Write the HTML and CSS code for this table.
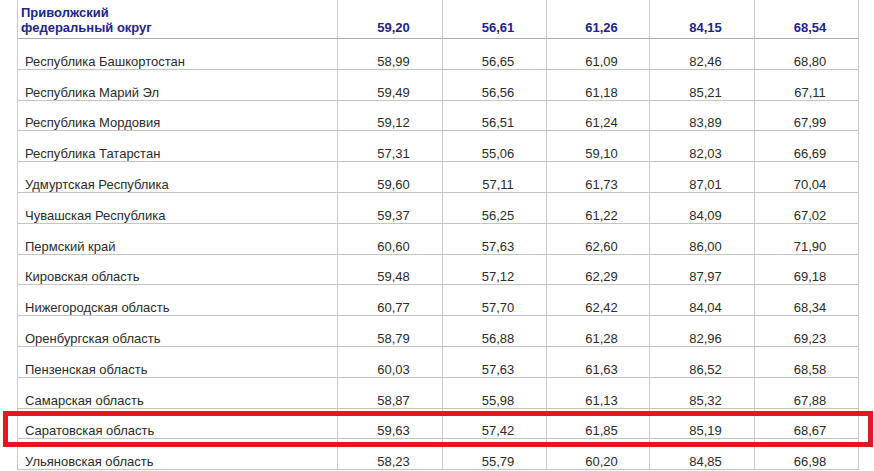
FILE: index.html
```html
<!DOCTYPE html>
<html lang="ru">
<head>
<meta charset="utf-8">
<title>Приволжский федеральный округ</title>
<link rel="stylesheet" href="styles.css">
</head>
<body>
<div class="page">
  <div class="grid">
    <div class="cell head name">Приволжский<br>федеральный округ</div>
    <div class="cell head num">59,20</div>
    <div class="cell head num">56,61</div>
    <div class="cell head num">61,26</div>
    <div class="cell head num">84,15</div>
    <div class="cell head num last">68,54</div>

    <div class="cell name">Республика Башкортостан</div>
    <div class="cell num">58,99</div><div class="cell num">56,65</div><div class="cell num">61,09</div><div class="cell num">82,46</div><div class="cell num last">68,80</div>

    <div class="cell name">Республика Марий Эл</div>
    <div class="cell num">59,49</div><div class="cell num">56,56</div><div class="cell num">61,18</div><div class="cell num">85,21</div><div class="cell num last">67,11</div>

    <div class="cell name">Республика Мордовия</div>
    <div class="cell num">59,12</div><div class="cell num">56,51</div><div class="cell num">61,24</div><div class="cell num">83,89</div><div class="cell num last">67,99</div>

    <div class="cell name">Республика Татарстан</div>
    <div class="cell num">57,31</div><div class="cell num">55,06</div><div class="cell num">59,10</div><div class="cell num">82,03</div><div class="cell num last">66,69</div>

    <div class="cell name">Удмуртская Республика</div>
    <div class="cell num">59,60</div><div class="cell num">57,11</div><div class="cell num">61,73</div><div class="cell num">87,01</div><div class="cell num last">70,04</div>

    <div class="cell name">Чувашская Республика</div>
    <div class="cell num">59,37</div><div class="cell num">56,25</div><div class="cell num">61,22</div><div class="cell num">84,09</div><div class="cell num last">67,02</div>

    <div class="cell name">Пермский край</div>
    <div class="cell num">60,60</div><div class="cell num">57,63</div><div class="cell num">62,60</div><div class="cell num">86,00</div><div class="cell num last">71,90</div>

    <div class="cell name">Кировская область</div>
    <div class="cell num">59,48</div><div class="cell num">57,12</div><div class="cell num">62,29</div><div class="cell num">87,97</div><div class="cell num last">69,18</div>

    <div class="cell name">Нижегородская область</div>
    <div class="cell num">60,77</div><div class="cell num">57,70</div><div class="cell num">62,42</div><div class="cell num">84,04</div><div class="cell num last">68,34</div>

    <div class="cell name">Оренбургская область</div>
    <div class="cell num">58,79</div><div class="cell num">56,88</div><div class="cell num">61,28</div><div class="cell num">82,96</div><div class="cell num last">69,23</div>

    <div class="cell name">Пензенская область</div>
    <div class="cell num">60,03</div><div class="cell num">57,63</div><div class="cell num">61,63</div><div class="cell num">86,52</div><div class="cell num last">68,58</div>

    <div class="cell name">Самарская область</div>
    <div class="cell num">58,87</div><div class="cell num">55,98</div><div class="cell num">61,13</div><div class="cell num">85,32</div><div class="cell num last">67,88</div>

    <div class="cell name">Саратовская область</div>
    <div class="cell num">59,63</div><div class="cell num">57,42</div><div class="cell num">61,85</div><div class="cell num">85,19</div><div class="cell num last">68,67</div>

    <div class="cell name">Ульяновская область</div>
    <div class="cell num">58,23</div><div class="cell num">55,79</div><div class="cell num">60,20</div><div class="cell num">84,85</div><div class="cell num last">66,98</div>
  </div>
  <div class="highlight"></div>
</div>
</body>
</html>
```

FILE: styles.css
```css
html, body {
  margin: 0;
  padding: 0;
  background: #ffffff;
}

body {
  font-family: "Liberation Sans", Arial, sans-serif;
  font-size: 13px;
  color: #2b2b2b;
  overflow: hidden;
  width: 874px;
  height: 471px;
}

.page {
  position: relative;
  padding-left: 17px;
}

.grid {
  display: grid;
  grid-template-columns: 320px 105px 104px 103px 105px 105px;
  grid-template-rows: 39px;
  grid-auto-rows: 30.8px;
  width: 842px;
}

.cell {
  box-sizing: border-box;
  border-left: 1px solid #cacaca;
  border-bottom: 1px solid #c4c4c4;
  display: flex;
  align-items: flex-end;
  line-height: 15px;
  white-space: nowrap;
}

.cell.last {
  border-right: 1px solid #cacaca;
}

.cell.name {
  padding-left: 7px;
}

.cell.num {
  justify-content: center;
  padding-left: 7px;
}

.cell.head {
  font-weight: bold;
  color: #23238a;
  border-bottom-color: #aaaaaa;
  padding-bottom: 3px;
}

.cell.head.name {
  padding-left: 3px;
}

.highlight {
  position: absolute;
  left: 3px;
  top: 411px;
  width: 870px;
  height: 36px;
  box-sizing: border-box;
  border: 5px solid #e3171e;
  pointer-events: none;
}
```
